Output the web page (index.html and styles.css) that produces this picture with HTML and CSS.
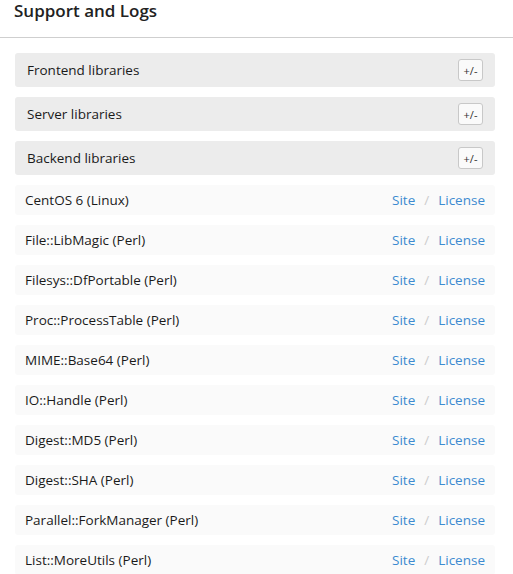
FILE: index.html
```html
<!DOCTYPE html>
<html>
<head>
<meta charset="utf-8">
<link rel="stylesheet" href="styles.css">
</head>
<body>
<div class="page-head"><h1 class="title">Support and Logs</h1></div>
<div class="content">
  <div class="section"><span class="section-name">Frontend libraries</span><button class="toggle">+/-</button></div>
  <div class="section"><span class="section-name">Server libraries</span><button class="toggle">+/-</button></div>
  <div class="section"><span class="section-name">Backend libraries</span><button class="toggle">+/-</button></div>
  <div class="row"><span class="name">CentOS 6 (Linux)</span><span class="links"><a class="link">Site</a><span class="sep">/</span><a class="link">License</a></span></div>
  <div class="row"><span class="name">File::LibMagic (Perl)</span><span class="links"><a class="link">Site</a><span class="sep">/</span><a class="link">License</a></span></div>
  <div class="row"><span class="name">Filesys::DfPortable (Perl)</span><span class="links"><a class="link">Site</a><span class="sep">/</span><a class="link">License</a></span></div>
  <div class="row"><span class="name">Proc::ProcessTable (Perl)</span><span class="links"><a class="link">Site</a><span class="sep">/</span><a class="link">License</a></span></div>
  <div class="row"><span class="name">MIME::Base64 (Perl)</span><span class="links"><a class="link">Site</a><span class="sep">/</span><a class="link">License</a></span></div>
  <div class="row"><span class="name">IO::Handle (Perl)</span><span class="links"><a class="link">Site</a><span class="sep">/</span><a class="link">License</a></span></div>
  <div class="row"><span class="name">Digest::MD5 (Perl)</span><span class="links"><a class="link">Site</a><span class="sep">/</span><a class="link">License</a></span></div>
  <div class="row"><span class="name">Digest::SHA (Perl)</span><span class="links"><a class="link">Site</a><span class="sep">/</span><a class="link">License</a></span></div>
  <div class="row"><span class="name">Parallel::ForkManager (Perl)</span><span class="links"><a class="link">Site</a><span class="sep">/</span><a class="link">License</a></span></div>
  <div class="row"><span class="name">List::MoreUtils (Perl)</span><span class="links"><a class="link">Site</a><span class="sep">/</span><a class="link">License</a></span></div>
</div>
</body>
</html>
```
FILE: styles.css
```css
html, body {
  margin: 0;
  padding: 0;
  background: #fff;
  font-family: "Open Sans", "Liberation Sans", sans-serif;
  color: #222;
  overflow: hidden;
}
.page-head {
  height: 37px;
  border-bottom: 1px solid #cfcfcf;
  padding-left: 14px;
}
.title {
  margin: 0;
  font-size: 17px;
  font-weight: 600;
  line-height: 22px;
  color: #222;
}
.content {
  padding: 15px 18px 0 15px;
  display: flex;
  flex-direction: column;
  gap: 10px;
}
.section {
  height: 34px;
  background: #ececec;
  border-radius: 3px;
  display: flex;
  align-items: center;
  justify-content: space-between;
  padding: 0 12px;
}
.section-name {
  font-size: 13.5px;
  font-weight: 500;
  color: #1a1a1a;
}
.toggle {
  width: 25px;
  height: 22px;
  padding: 0;
  border: 1px solid #c8c8c8;
  border-radius: 3px;
  background: #fafafa;
  font-family: "Open Sans", "Liberation Sans", sans-serif;
  font-size: 11px;
  color: #333;
}
.row {
  height: 30px;
  background: #fafafa;
  border-radius: 3px;
  display: flex;
  align-items: center;
  justify-content: space-between;
  padding: 0 10px;
}
.name {
  font-size: 13.5px;
  font-weight: 500;
  color: #1a1a1a;
}
.links {
  display: flex;
  align-items: center;
  font-size: 13.5px;
}
.link {
  color: #3c8ad0;
  font-weight: 500;
}
.sep {
  color: #ccc;
  margin: 0 9px;
}
```
